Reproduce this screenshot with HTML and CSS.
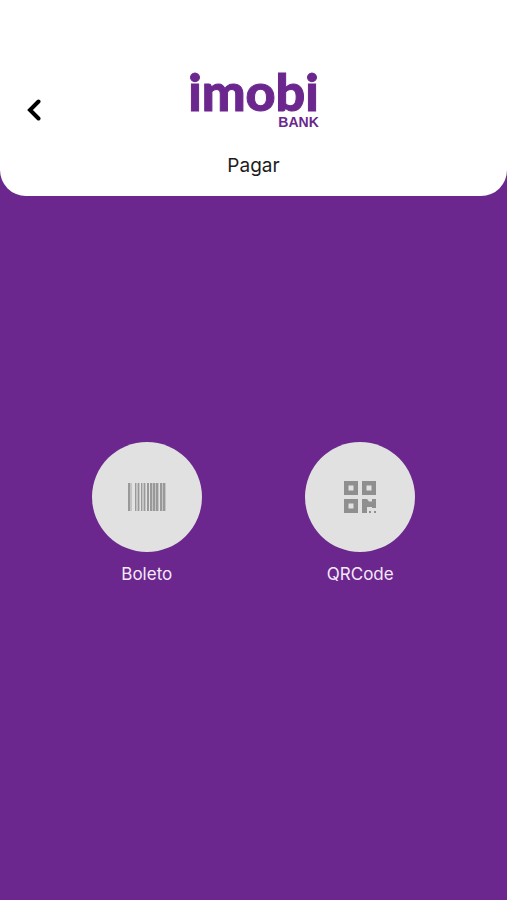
FILE: index.html
```
<!DOCTYPE html>
<html lang="pt-BR">
<head>
<meta charset="utf-8">
<meta name="viewport" content="width=device-width, initial-scale=1">
<title>Pagar</title>
<link rel="stylesheet" href="styles.css">
</head>
<body>
<header class="header">
  <button class="back" type="button" aria-label="Voltar">
    <svg width="14" height="22" viewBox="0 0 14 22" aria-hidden="true"><path d="M11.500 2.500 3 11l8.500 8.500" fill="none" stroke="#000" stroke-width="4" stroke-linecap="round"/></svg>
  </button>
  <div class="brand">
    <span class="brand-name">imobi</span>
    <span class="brand-sub">BANK</span>
  </div>
  <h1 class="title">Pagar</h1>
</header>
<main class="options">
  <button class="option" type="button">
    <span class="disc">
      <svg width="38" height="28" viewBox="0 0 38 28" aria-hidden="true">
        <path fill="#c4c4c4" d="M0 0h38v28H0z"/>
        <path fill="#999" d="M0 0h2v28H0zM7 0h1v28H7zM10 0h1v28h-1zM13 0h1v28h-1zM16 0h1v28h-1zM19 0h2v28h-2zM22 0h2v28h-2zM25 0h2v28h-2zM28 0h2v28h-2zM32 0h2v28h-2zM35 0h2v28h-2z"/>
        <path fill="#e2e2e2" d="M4 0h3v28H4zM12 0h1v28h-1zM18 0h1v28h-1zM21 0h1v28h-1zM31 0h1v28h-1z"/>
      </svg>
    </span>
    <span class="label">Boleto</span>
  </button>
  <button class="option" type="button">
    <span class="disc">
      <svg width="34" height="34" viewBox="0 0 34 34" fill="#8f8f8f" aria-hidden="true">
        <path fill-rule="evenodd" d="M1 1h14v14H1zM5.500 5.500v5h5v-5zM19 1h14v14H19zM23.500 5.500v5h5v-5zM1 19h14v14H1zM5.500 23.500v5h5v-5z"/>
        <path d="M19 19h5l2 2.500h3V19h4v9h-4v-1h-5v6h-5zM26 31h2v2h-2zM31 31h2v2h-2z"/>
      </svg>
    </span>
    <span class="label">QRCode</span>
  </button>
</main>
</body>
</html>
```
FILE: styles.css
```
* {
  box-sizing: border-box;
}

body {
  margin: 0;
  min-height: 100vh;
  background: #6b278d;
  font-family: Inter, "Liberation Sans", sans-serif;
}

button {
  padding: 0;
  border: 0;
  background: none;
  font: inherit;
  cursor: pointer;
}

.header {
  display: grid;
  grid-template-columns: 44px 1fr 44px;
  align-items: center;
  padding: 64px 12px 16px;
  border-radius: 0 0 26px 26px;
  background: #fff;
}

.back {
  display: grid;
  place-items: center;
  height: 44px;
  margin-top: 24px;
}

.brand {
  display: grid;
  justify-self: center;
  color: #6b278d;
}

.brand-name {
  font: 900 52px/48px Lato, sans-serif;
  -webkit-text-stroke: 1px #6b278d;
}

.brand-sub {
  justify-self: end;
  font: 700 14px/14px "Liberation Sans", sans-serif;
}

.title {
  grid-column: 2;
  margin: 20px 0 0;
  color: #1c1c1c;
  font-size: 19px;
  font-weight: 400;
  line-height: 28px;
  text-align: center;
}

.options {
  display: grid;
  grid-template-columns: 1fr 1fr;
  padding: 246px 40px 40px;
}

.option {
  display: grid;
  justify-self: center;
  justify-items: center;
  gap: 12px;
}

.disc {
  display: grid;
  place-items: center;
  width: 110px;
  height: 110px;
  border-radius: 50%;
  background: #e1e1e1;
}

.label {
  color: #f5e9fa;
  font-size: 17px;
  line-height: 20px;
}
```
